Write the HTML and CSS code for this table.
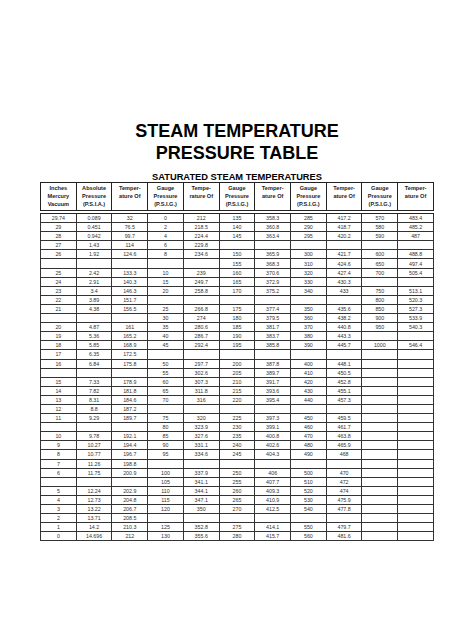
FILE: index.html
```html
<!DOCTYPE html>
<html>
<head>
<meta charset="utf-8">
<link rel="stylesheet" href="styles.css">
</head>
<body>
<div class="page">
  <h1 class="title">STEAM TEMPERATURE<br>PRESSURE TABLE</h1>
  <h2 class="subtitle">SATURATED STEAM TEMPERATURES</h2>
  <table class="steam">
    <thead>
      <tr>
        <th>Inches<br>Mercury<br>Vacuum</th>
        <th>Absolute<br>Pressure<br>(P.S.I.A.)</th>
        <th>Temper-<br>ature Of</th>
        <th>Gauge<br>Pressure<br>(P.S.I.G.)</th>
        <th>Tempe-<br>rature Of</th>
        <th>Gauge<br>Pressure<br>(P.S.I.G.)</th>
        <th>Temper-<br>ature Of</th>
        <th>Gauge<br>Pressure<br>(P.S.I.G.)</th>
        <th>Temper-<br>ature Of</th>
        <th>Gauge<br>Pressure<br>(P.S.I.G.)</th>
        <th>Temper-<br>ature Of</th>
      </tr>
    </thead>
    <tbody>
      <tr><td>29.74</td><td>0.089</td><td>32</td><td>0</td><td>212</td><td>135</td><td>358.3</td><td>285</td><td>417.2</td><td>570</td><td>483.4</td></tr>
      <tr><td>29</td><td>0.451</td><td>76.5</td><td>2</td><td>218.5</td><td>140</td><td>360.8</td><td>290</td><td>418.7</td><td>580</td><td>485.2</td></tr>
      <tr><td>28</td><td>0.942</td><td>99.7</td><td>4</td><td>224.4</td><td>145</td><td>363.4</td><td>295</td><td>420.2</td><td>590</td><td>487</td></tr>
      <tr><td>27</td><td>1.43</td><td>114</td><td>6</td><td>229.8</td><td></td><td></td><td></td><td></td><td></td><td></td></tr>
      <tr><td>26</td><td>1.92</td><td>124.6</td><td>8</td><td>234.6</td><td>150</td><td>365.9</td><td>300</td><td>421.7</td><td>600</td><td>488.8</td></tr>
      <tr><td></td><td></td><td></td><td></td><td></td><td>155</td><td>368.3</td><td>310</td><td>424.6</td><td>650</td><td>497.4</td></tr>
      <tr><td>25</td><td>2.42</td><td>133.3</td><td>10</td><td>239</td><td>160</td><td>370.6</td><td>320</td><td>427.4</td><td>700</td><td>505.4</td></tr>
      <tr><td>24</td><td>2.91</td><td>140.3</td><td>15</td><td>249.7</td><td>165</td><td>372.9</td><td>330</td><td>430.3</td><td></td><td></td></tr>
      <tr><td>23</td><td>3.4</td><td>146.3</td><td>20</td><td>258.8</td><td>170</td><td>375.2</td><td>340</td><td>433</td><td>750</td><td>513.1</td></tr>
      <tr><td>22</td><td>3.89</td><td>151.7</td><td></td><td></td><td></td><td></td><td></td><td></td><td>800</td><td>520.3</td></tr>
      <tr><td>21</td><td>4.38</td><td>156.5</td><td>25</td><td>266.8</td><td>175</td><td>377.4</td><td>350</td><td>435.6</td><td>850</td><td>527.3</td></tr>
      <tr><td></td><td></td><td></td><td>30</td><td>274</td><td>180</td><td>379.5</td><td>360</td><td>438.2</td><td>900</td><td>533.9</td></tr>
      <tr><td>20</td><td>4.87</td><td>161</td><td>35</td><td>280.6</td><td>185</td><td>381.7</td><td>370</td><td>440.8</td><td>950</td><td>540.3</td></tr>
      <tr><td>19</td><td>5.36</td><td>165.2</td><td>40</td><td>286.7</td><td>190</td><td>383.7</td><td>380</td><td>443.3</td><td></td><td></td></tr>
      <tr><td>18</td><td>5.85</td><td>168.9</td><td>45</td><td>292.4</td><td>195</td><td>385.8</td><td>390</td><td>445.7</td><td>1000</td><td>546.4</td></tr>
      <tr><td>17</td><td>6.35</td><td>172.5</td><td></td><td></td><td></td><td></td><td></td><td></td><td></td><td></td></tr>
      <tr><td>16</td><td>6.84</td><td>175.8</td><td>50</td><td>297.7</td><td>200</td><td>387.8</td><td>400</td><td>448.1</td><td></td><td></td></tr>
      <tr><td></td><td></td><td></td><td>55</td><td>302.6</td><td>205</td><td>389.7</td><td>410</td><td>450.5</td><td></td><td></td></tr>
      <tr><td>15</td><td>7.33</td><td>178.9</td><td>60</td><td>307.3</td><td>210</td><td>391.7</td><td>420</td><td>452.8</td><td></td><td></td></tr>
      <tr><td>14</td><td>7.82</td><td>181.8</td><td>65</td><td>311.8</td><td>215</td><td>393.6</td><td>430</td><td>455.1</td><td></td><td></td></tr>
      <tr><td>13</td><td>8.31</td><td>184.6</td><td>70</td><td>316</td><td>220</td><td>395.4</td><td>440</td><td>457.3</td><td></td><td></td></tr>
      <tr><td>12</td><td>8.8</td><td>187.2</td><td></td><td></td><td></td><td></td><td></td><td></td><td></td><td></td></tr>
      <tr><td>11</td><td>9.29</td><td>189.7</td><td>75</td><td>320</td><td>225</td><td>397.3</td><td>450</td><td>459.5</td><td></td><td></td></tr>
      <tr><td></td><td></td><td></td><td>80</td><td>323.9</td><td>230</td><td>399.1</td><td>460</td><td>461.7</td><td></td><td></td></tr>
      <tr><td>10</td><td>9.78</td><td>192.1</td><td>85</td><td>327.6</td><td>235</td><td>400.8</td><td>470</td><td>463.8</td><td></td><td></td></tr>
      <tr><td>9</td><td>10.27</td><td>194.4</td><td>90</td><td>331.1</td><td>240</td><td>402.6</td><td>480</td><td>465.9</td><td></td><td></td></tr>
      <tr><td>8</td><td>10.77</td><td>196.7</td><td>95</td><td>334.6</td><td>245</td><td>404.3</td><td>490</td><td>468</td><td></td><td></td></tr>
      <tr><td>7</td><td>11.26</td><td>198.8</td><td></td><td></td><td></td><td></td><td></td><td></td><td></td><td></td></tr>
      <tr><td>6</td><td>11.75</td><td>200.9</td><td>100</td><td>337.9</td><td>250</td><td>406</td><td>500</td><td>470</td><td></td><td></td></tr>
      <tr><td></td><td></td><td></td><td>105</td><td>341.1</td><td>255</td><td>407.7</td><td>510</td><td>472</td><td></td><td></td></tr>
      <tr><td>5</td><td>12.24</td><td>202.9</td><td>110</td><td>344.1</td><td>260</td><td>409.3</td><td>520</td><td>474</td><td></td><td></td></tr>
      <tr><td>4</td><td>12.73</td><td>204.8</td><td>115</td><td>347.1</td><td>265</td><td>410.9</td><td>530</td><td>475.9</td><td></td><td></td></tr>
      <tr><td>3</td><td>13.22</td><td>206.7</td><td>120</td><td>350</td><td>270</td><td>412.5</td><td>540</td><td>477.8</td><td></td><td></td></tr>
      <tr><td>2</td><td>13.71</td><td>208.5</td><td></td><td></td><td></td><td></td><td></td><td></td><td></td><td></td></tr>
      <tr><td>1</td><td>14.2</td><td>210.3</td><td>125</td><td>352.8</td><td>275</td><td>414.1</td><td>550</td><td>479.7</td><td></td><td></td></tr>
      <tr><td>0</td><td>14.696</td><td>212</td><td>130</td><td>355.6</td><td>280</td><td>415.7</td><td>560</td><td>481.6</td><td></td><td></td></tr>
    </tbody>
  </table>
</div>
</body>
</html>
```
FILE: styles.css
```css
html, body {
  margin: 0;
  padding: 0;
  background: #fff;
}
body {
  font-family: "Liberation Sans", Arial, sans-serif;
  color: #111;
}
.page {
  width: 474px;
  padding-top: 120px;
  display: flex;
  flex-direction: column;
  align-items: center;
}
.title {
  margin: 0;
  font-size: 18px;
  line-height: 22px;
  font-weight: bold;
  text-align: center;
  color: #000;
}
.subtitle {
  margin: 8px 0 0;
  font-size: 9.3px;
  line-height: 10px;
  font-weight: bold;
  text-align: center;
  color: #000;
}
.steam {
  width: 394px;
  table-layout: fixed;
  border-collapse: collapse;
  border: 1px solid #222;
}
.steam th {
  border: 1px solid #222;
  border-bottom: 4px double #222;
  font-size: 5.6px;
  line-height: 8px;
  font-weight: bold;
  color: #222;
  vertical-align: top;
  text-align: center;
  padding: 1px 0 2px;
  height: 21px;
}
.steam td {
  border: 1px solid #333;
  font-size: 5.3px;
  line-height: 6px;
  height: 8.1px;
  padding: 0;
  text-align: center;
  vertical-align: middle;
  color: #333;
}
```
